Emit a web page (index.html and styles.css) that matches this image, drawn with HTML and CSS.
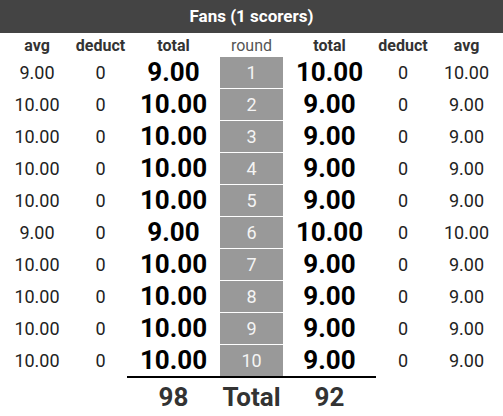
FILE: index.html
```html
<!DOCTYPE html>
<html lang="en">

<head>
  <meta charset="UTF-8">
  <title>Fans</title>
  <link rel="stylesheet" href="styles.css">
</head>

<body>
  <div class="panel">
    <div class="title">Fans (1 scorers)</div>
    <div class="board">
      <div class="head">avg</div>
      <div class="head">deduct</div>
      <div class="head">total</div>
      <div class="head round-head">round</div>
      <div class="head">total</div>
      <div class="head">deduct</div>
      <div class="head">avg</div>

      <div class="avg">9.00</div><div class="deduct">0</div><div class="total">9.00</div><div class="round">1</div><div class="total">10.00</div><div class="deduct">0</div><div class="avg">10.00</div>
      <div class="avg">10.00</div><div class="deduct">0</div><div class="total">10.00</div><div class="round">2</div><div class="total">9.00</div><div class="deduct">0</div><div class="avg">9.00</div>
      <div class="avg">10.00</div><div class="deduct">0</div><div class="total">10.00</div><div class="round">3</div><div class="total">9.00</div><div class="deduct">0</div><div class="avg">9.00</div>
      <div class="avg">10.00</div><div class="deduct">0</div><div class="total">10.00</div><div class="round">4</div><div class="total">9.00</div><div class="deduct">0</div><div class="avg">9.00</div>
      <div class="avg">10.00</div><div class="deduct">0</div><div class="total">10.00</div><div class="round">5</div><div class="total">9.00</div><div class="deduct">0</div><div class="avg">9.00</div>
      <div class="avg">9.00</div><div class="deduct">0</div><div class="total">9.00</div><div class="round">6</div><div class="total">10.00</div><div class="deduct">0</div><div class="avg">10.00</div>
      <div class="avg">10.00</div><div class="deduct">0</div><div class="total">10.00</div><div class="round">7</div><div class="total">9.00</div><div class="deduct">0</div><div class="avg">9.00</div>
      <div class="avg">10.00</div><div class="deduct">0</div><div class="total">10.00</div><div class="round">8</div><div class="total">9.00</div><div class="deduct">0</div><div class="avg">9.00</div>
      <div class="avg">10.00</div><div class="deduct">0</div><div class="total">10.00</div><div class="round">9</div><div class="total">9.00</div><div class="deduct">0</div><div class="avg">9.00</div>
      <div class="avg">10.00</div><div class="deduct">0</div><div class="total">10.00</div><div class="round">10</div><div class="total">9.00</div><div class="deduct">0</div><div class="avg">9.00</div>

      <div class="foot-empty"></div>
      <div class="foot-empty"></div>
      <div class="foot">98</div>
      <div class="foot">Total</div>
      <div class="foot">92</div>
      <div class="foot-empty"></div>
      <div class="foot-empty"></div>
    </div>
  </div>
</body>

</html>
```

FILE: styles.css
```css
body {
  margin: 0;
  background: #fff;
  font-family: Roboto, "Liberation Sans", sans-serif;
  color: #222;
}

.panel {
  width: 503px;
}

.title {
  height: 33px;
  line-height: 33px;
  background: #444;
  color: #fff;
  font-weight: bold;
  font-size: 17px;
  text-align: center;
}

.board {
  display: grid;
  grid-template-columns: 74px 53px 93px 63px 93px 54px 73px;
  grid-template-rows: 23px repeat(10, 32px) 40px;
}

.board > div {
  display: flex;
  justify-content: center;
  align-items: center;
  box-sizing: border-box;
}

.head {
  font-size: 16px;
  font-weight: bold;
  color: #333;
  padding-top: 2px;
}

.round-head {
  font-weight: normal;
  color: #555;
}

.avg,
.deduct {
  font-size: 18px;
  color: #222;
}

.total {
  font-size: 26px;
  font-weight: bold;
  color: #000;
}

.round {
  background: #999;
  border-top: 1px solid #fff;
  color: #f4f4f4;
  font-size: 18px;
}

.foot {
  border-top: 2px solid #000;
  font-size: 26px;
  font-weight: bold;
  color: #333;
}
```
